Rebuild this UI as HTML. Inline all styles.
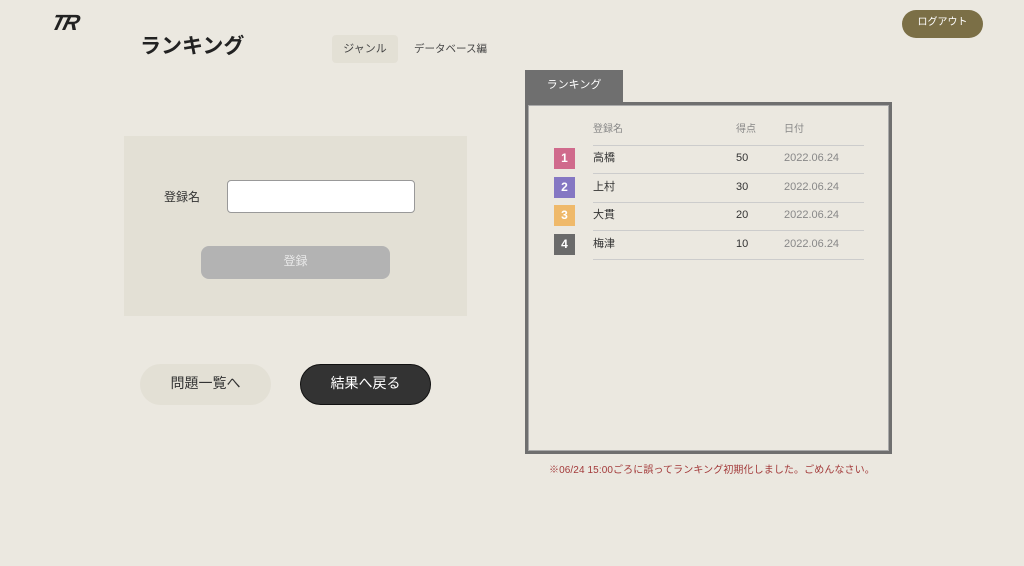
<!DOCTYPE html>
<html><head><meta charset="utf-8"><style>
*{margin:0;padding:0;box-sizing:border-box}
body{width:1024px;height:566px;background:#ebe8e0;font-family:"Liberation Sans","Noto Sans CJK JP",sans-serif;position:relative;overflow:hidden;color:#333}
.a{position:absolute}
.t{font-size:11px;height:21px;line-height:21px}
</style></head><body>
<div class="a" style="left:52px;top:10px;font-family:'Liberation Sans',sans-serif;font-style:italic;font-weight:bold;font-size:22px;color:#222;letter-spacing:-2px;transform:skewX(-15deg)">TR</div>
<div class="a" style="left:140px;top:30px;font-size:21px;font-weight:bold;color:#222">ランキング</div>
<div class="a" style="left:332px;top:35px;width:66px;height:28px;background:#e3e0d5;border-radius:4px;font-size:11px;line-height:28px;text-align:center;color:#444">ジャンル</div>
<div class="a" style="left:414px;top:35px;font-size:10.5px;line-height:28px;color:#444">データベース編</div>
<div class="a" style="left:902px;top:10px;width:81px;height:28px;background:#7b6f46;border-radius:14px;color:#fff;font-size:10px;line-height:26px;text-align:center">ログアウト</div>

<div class="a" style="left:124px;top:136px;width:343px;height:180px;background:#e3e0d5"></div>
<div class="a" style="left:164px;top:188px;font-size:12px;color:#333">登録名</div>
<div class="a" style="left:227px;top:180px;width:188px;height:33px;background:#fff;border:1px solid #999;border-radius:4px"></div>
<div class="a" style="left:201px;top:246px;width:189px;height:33px;background:#b3b3b3;border-radius:8px;color:#e8e8e8;font-size:12px;line-height:31px;text-align:center">登録</div>
<div class="a" style="left:140px;top:364px;width:131px;height:41px;background:#e3e0d5;border-radius:21px;font-size:14px;line-height:39px;text-align:center;color:#333">問題一覧へ</div>
<div class="a" style="left:300px;top:364px;width:131px;height:41px;background:#333;border:1px solid #111;border-radius:21px;font-size:14px;line-height:37px;text-align:center;color:#fff">結果へ戻る</div>

<div class="a" style="left:525px;top:70px;width:98px;height:34px;background:#6f6f6f;color:#fff;font-size:11px;line-height:31px;text-align:center">ランキング</div>
<div class="a" style="left:525px;top:102px;width:367px;height:352px;border:3px solid #6f6f6f;outline:1px solid #aaa;outline-offset:-4px"></div>
<div class="a t" style="left:593px;top:119px;font-size:10px;color:#888">登録名</div>
<div class="a t" style="left:736px;top:119px;font-size:10px;color:#888">得点</div>
<div class="a t" style="left:784px;top:119px;font-size:10px;color:#888">日付</div>
<div class="a" style="left:593px;top:145px;width:271px;border-top:1px solid #ccc"></div>
<div class="a" style="left:593px;top:173px;width:271px;border-top:1px solid #ccc"></div>
<div class="a" style="left:593px;top:202px;width:271px;border-top:1px solid #ccc"></div>
<div class="a" style="left:593px;top:230px;width:271px;border-top:1px solid #ccc"></div>
<div class="a" style="left:593px;top:259px;width:271px;border-top:1px solid #ccc"></div>

<div class="a" style="left:554px;top:148px;width:21px;height:21px;background:#d06a8c;color:#fff;font-size:12px;font-weight:bold;line-height:21px;text-align:center">1</div>
<div class="a" style="left:554px;top:177px;width:21px;height:21px;background:#8577c3;color:#fff;font-size:12px;font-weight:bold;line-height:21px;text-align:center">2</div>
<div class="a" style="left:554px;top:205px;width:21px;height:21px;background:#efb96a;color:#fff;font-size:12px;font-weight:bold;line-height:21px;text-align:center">3</div>
<div class="a" style="left:554px;top:234px;width:21px;height:21px;background:#6a6a6a;color:#fff;font-size:12px;font-weight:bold;line-height:21px;text-align:center">4</div>

<div class="a t" style="left:593px;top:148px;color:#333">高橋</div>
<div class="a t" style="left:736px;top:148px;color:#333">50</div>
<div class="a t" style="left:784px;top:148px;color:#888">2022.06.24</div>
<div class="a t" style="left:593px;top:177px;color:#333">上村</div>
<div class="a t" style="left:736px;top:177px;color:#333">30</div>
<div class="a t" style="left:784px;top:177px;color:#888">2022.06.24</div>
<div class="a t" style="left:593px;top:205px;color:#333">大貫</div>
<div class="a t" style="left:736px;top:205px;color:#333">20</div>
<div class="a t" style="left:784px;top:205px;color:#888">2022.06.24</div>
<div class="a t" style="left:593px;top:234px;color:#333">梅津</div>
<div class="a t" style="left:736px;top:234px;color:#333">10</div>
<div class="a t" style="left:784px;top:234px;color:#888">2022.06.24</div>

<div class="a" style="left:549px;top:461px;font-size:10px;color:#a33a3a;letter-spacing:0.1px">※06/24 15:00ごろに誤ってランキング初期化しました。ごめんなさい。</div>
</body></html>
